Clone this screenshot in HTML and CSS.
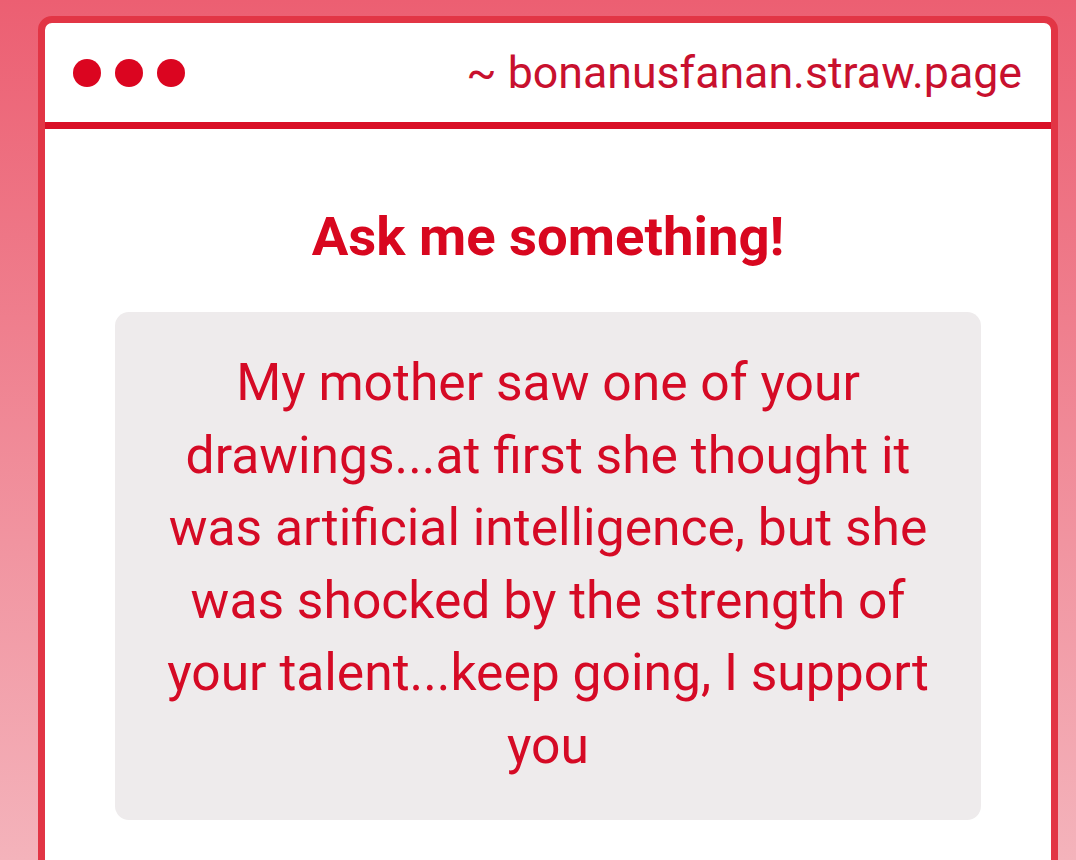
FILE: index.html
```html
<!DOCTYPE html>
<html lang="en">
<head>
<meta charset="utf-8">
<title>Ask me something!</title>
<link rel="stylesheet" href="styles.css">
</head>
<body>
<div class="window">
  <header class="bar">
    <div class="dots">
      <span class="dot"></span>
      <span class="dot"></span>
      <span class="dot"></span>
    </div>
    <div class="url">~ bonanusfanan.straw.page</div>
  </header>
  <main class="content">
    <h1 class="title">Ask me something!</h1>
    <div class="question">
      <p>My mother saw one of your drawings...at first she thought it was artificial intelligence, but she was shocked by the strength of your talent...keep going, I support you</p>
    </div>
  </main>
</div>
</body>
</html>
```
FILE: styles.css
```css
html, body {
  margin: 0;
  height: 100%;
}
body {
  background: linear-gradient(180deg, #ec5f72 0%, #f4b3bb 100%);
  font-family: Roboto, "Liberation Sans", sans-serif;
  padding: 16px 18px 0 38px;
  box-sizing: border-box;
  overflow: hidden;
}
.window {
  width: 1020px;
  box-sizing: border-box;
  border: 7px solid #e23545;
  border-radius: 14px;
  background: #fff;
  height: 900px;
}
.bar {
  height: 99px;
  border-bottom: 7px solid #d90f26;
  display: flex;
  align-items: center;
  justify-content: space-between;
  padding: 0 29px 0 28px;
}
.dots {
  display: flex;
  gap: 14px;
}
.dot {
  width: 28px;
  height: 28px;
  border-radius: 50%;
  background: #db0520;
}
.url {
  font-size: 44.7px;
  color: #c8102e;
}
.content {
  padding: 0 70px;
}
.title {
  margin: 0;
  padding-top: 75px;
  font-size: 54.5px;
  font-weight: 700;
  text-align: center;
  color: #d8071f;
  line-height: 64px;
}
.question {
  margin-top: 44px;
  background: #eeebec;
  border-radius: 14px;
  padding: 35px 40px 37px;
  text-align: center;
}
.question p {
  margin: 0;
  font-size: 51.6px;
  line-height: 72.6px;
  color: #d50a25;
}
```
